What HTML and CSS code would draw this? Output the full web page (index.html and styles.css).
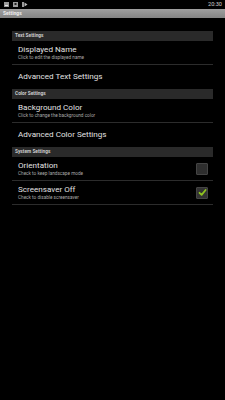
FILE: index.html
```html
<!DOCTYPE html>
<html lang="en">
<head>
    <meta charset="UTF-8">
    <meta name="viewport" content="width=device-width, initial-scale=1.0">
    <title>Settings</title>
    <link rel="stylesheet" href="styles.css">
</head>
<body>
    <div class="statusbar">
        <div class="icons">
            <svg width="5" height="5" viewBox="0 0 5 5"><rect x="0" y="0" width="5" height="5" fill="#9a9a9a"/><rect x="1" y="3" width="3" height="1" fill="#e6e6e6"/></svg>
            <svg width="5" height="5" viewBox="0 0 5 5"><rect x="0" y="0" width="5" height="5" fill="#9a9a9a"/><rect x="1.5" y="1" width="2" height="2" fill="#222"/></svg>
            <svg width="6" height="5" viewBox="0 0 6 5"><rect x="0" y="0" width="2" height="5" fill="#9a9a9a"/><path d="M2.5 0.5 L5.5 2.5 L2.5 4.5 Z" fill="#bbb"/></svg>
        </div>
        <span class="clock">20:30</span>
    </div>
    <div class="titlebar">Settings</div>

    <div class="list">
        <div class="category">Text Settings</div>
        <div class="pref">
            <div class="pref_text">
                <div class="pref_title">Displayed Name</div>
                <div class="pref_summary">Click to edit the displayed name</div>
            </div>
        </div>
        <div class="pref last">
            <div class="pref_text">
                <div class="pref_title">Advanced Text Settings</div>
            </div>
        </div>

        <div class="category">Color Settings</div>
        <div class="pref">
            <div class="pref_text">
                <div class="pref_title">Background Color</div>
                <div class="pref_summary">Click to change the background color</div>
            </div>
        </div>
        <div class="pref last">
            <div class="pref_text">
                <div class="pref_title">Advanced Color Settings</div>
            </div>
        </div>

        <div class="category">System Settings</div>
        <div class="pref">
            <div class="pref_text">
                <div class="pref_title">Orientation</div>
                <div class="pref_summary">Check to keep landscape mode</div>
            </div>
            <div class="checkbox"></div>
        </div>
        <div class="pref">
            <div class="pref_text">
                <div class="pref_title">Screensaver Off</div>
                <div class="pref_summary">Check to disable screensaver</div>
            </div>
            <div class="checkbox checked">
                <svg width="9" height="9" viewBox="0 0 9 9"><path d="M1.5 4.8 L3.6 6.8 L7.6 2" fill="none" stroke="#8fc31f" stroke-width="1.8" stroke-linecap="round" stroke-linejoin="round"/></svg>
            </div>
        </div>
    </div>
</body>
</html>
```

FILE: styles.css
```css
body{
    margin: 0;
    background: #000;
    font-family: Roboto, "Noto Sans", sans-serif;
    width: 225px;
    height: 400px;
    overflow: hidden;
}
.statusbar{
    height: 9px;
    display: flex;
    justify-content: space-between;
    align-items: center;
    padding: 0 3px 0 4px;
}
.icons{
    display: flex;
    gap: 4px;
    align-items: center;
}
.icons svg{
    display: block;
}
.clock{
    color: #cfcfcf;
    font-size: 5.6px;
    line-height: 9px;
}
.titlebar{
    height: 9px;
    line-height: 9px;
    padding-left: 3px;
    background: linear-gradient(#a0a0a0, #848484);
    color: #ececec;
    font-size: 5px;
    font-weight: bold;
}
.list{
    margin: 13px 12px 0 12px;
}
.category{
    height: 10px;
    line-height: 10px;
    padding-left: 3px;
    background: #2a2a2a;
    color: #cdcdcd;
    font-size: 4.8px;
    font-weight: bold;
}
.pref{
    height: 23px;
    display: flex;
    align-items: center;
    justify-content: space-between;
    padding: 0 5px 0 6px;
    border-bottom: 1px solid #2c2c2c;
}
.pref.last{
    border-bottom-color: #000;
}
.pref_text{
    display: flex;
    flex-direction: column;
    gap: 1px;
}
.pref_title{
    color: #e2e2e2;
    font-size: 8.1px;
    line-height: 9px;
}
.pref_summary{
    color: #a8a8a8;
    font-size: 4.7px;
    line-height: 6px;
}
.checkbox{
    width: 10px;
    height: 10px;
    border: 1px solid #444;
    border-radius: 1px;
    background-color: #2e2e2e;
    background-image: radial-gradient(#3c3c3c 35%, transparent 40%);
    background-size: 2px 2px;
    display: flex;
    align-items: center;
    justify-content: center;
}
.checkbox.checked{
    background-image: none;
    background-color: #333;
}
.checkbox svg{
    display: block;
}
```
